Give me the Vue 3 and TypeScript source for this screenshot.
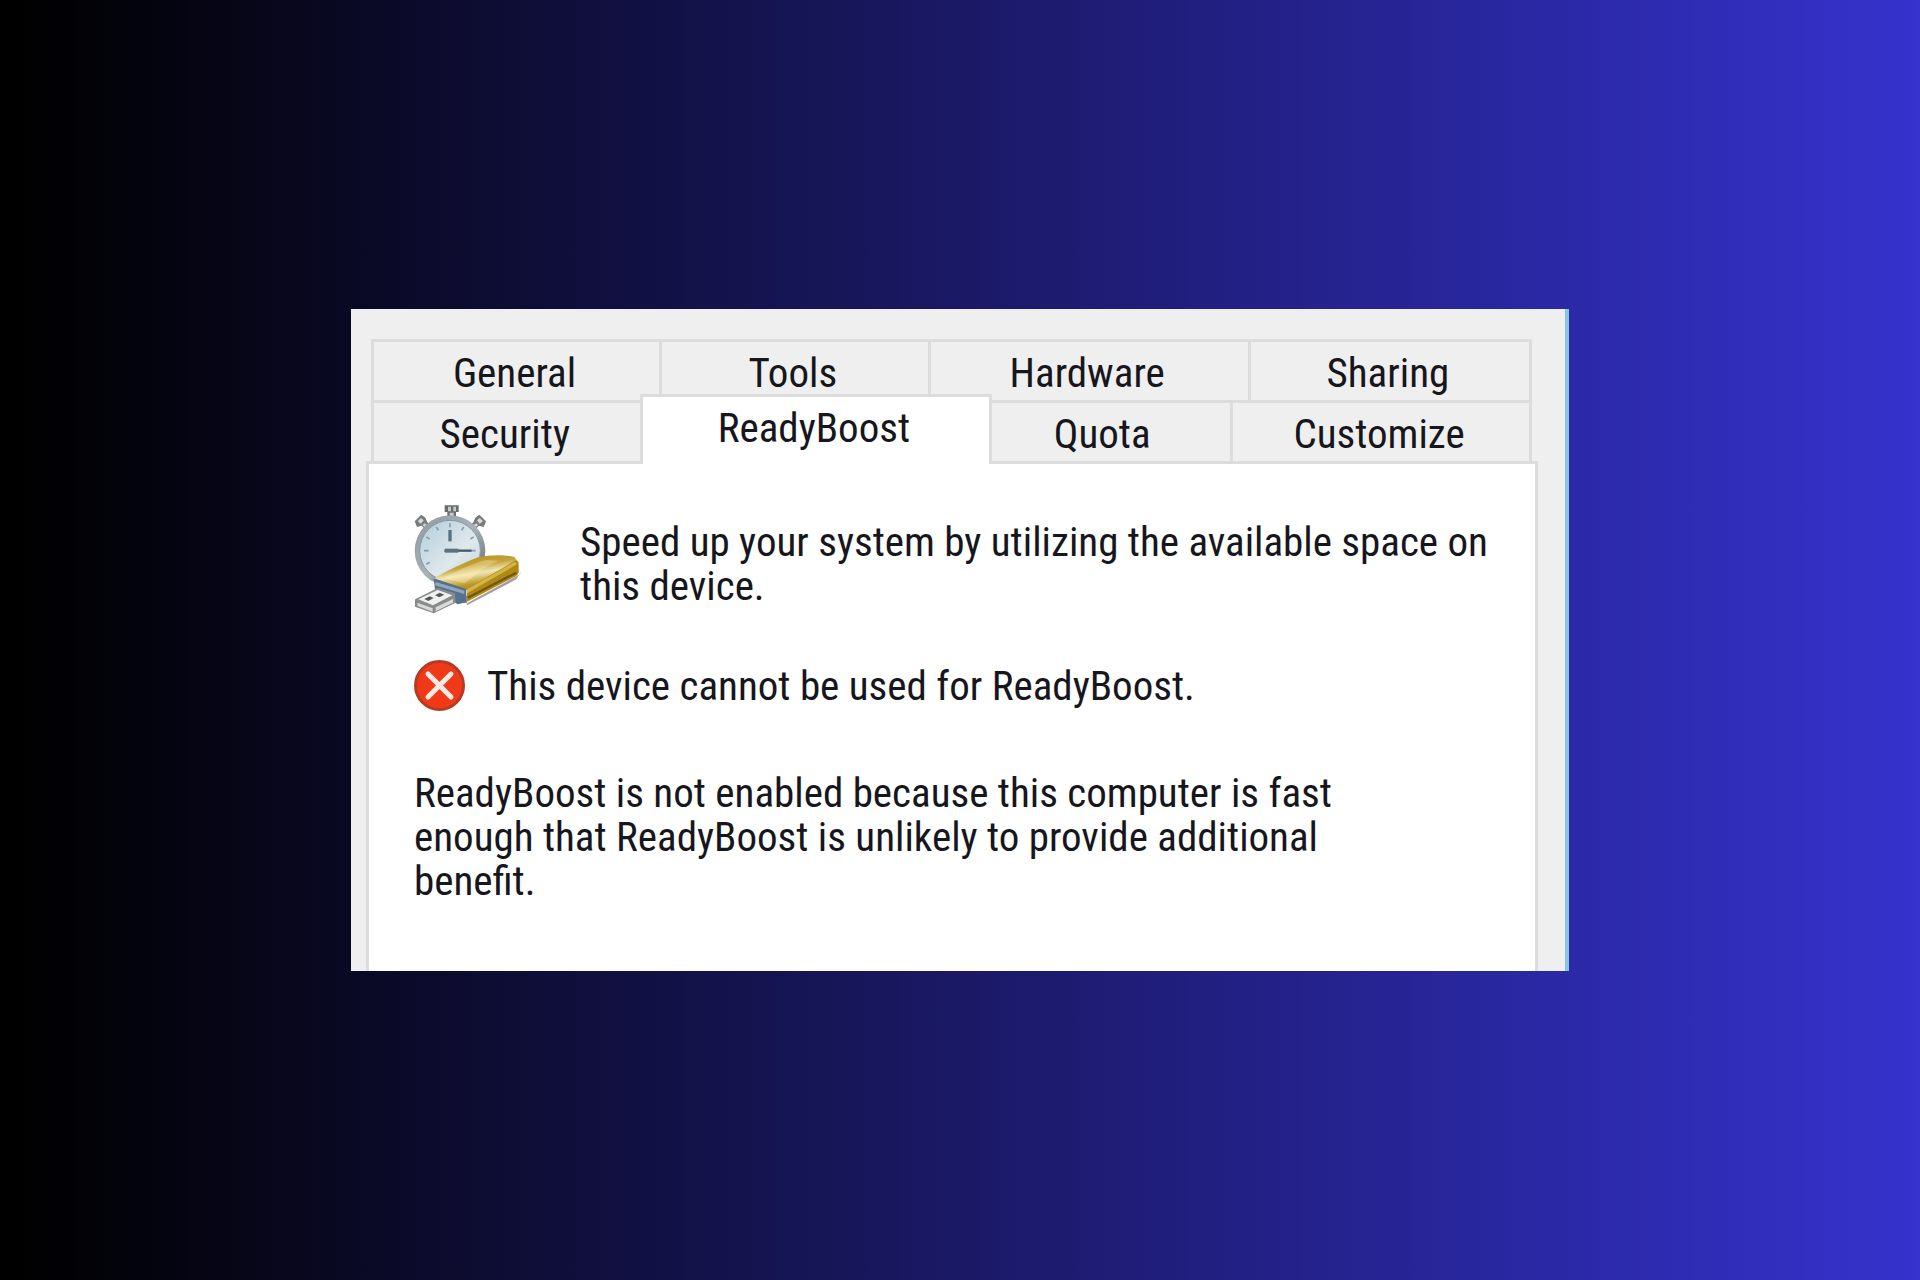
<script setup lang="ts">
import { ref } from 'vue'

interface Tab {
  name: string
  share: number
}

const rows: Tab[][] = [
  [
    { name: 'General', share: 288 },
    { name: 'Tools', share: 268 },
    { name: 'Hardware', share: 321 },
    { name: 'Sharing', share: 281 },
  ],
  [
    { name: 'Security', share: 268 },
    { name: 'ReadyBoost', share: 351 },
    { name: 'Quota', share: 254 },
    { name: 'Customize', share: 299 },
  ],
]

const active = ref('ReadyBoost')
</script>

<template>
  <main class="desktop">
    <section class="dialog">
      <div class="tabs" role="tablist">
        <div v-for="(row, i) in rows" :key="i" class="tab-row">
          <button
            v-for="tab in row"
            :key="tab.name"
            type="button"
            role="tab"
            class="tab"
            :class="{ selected: tab.name === active }"
            :aria-selected="tab.name === active"
            :style="{ flexGrow: tab.share }"
            @click="active = tab.name"
          >
            {{ tab.name }}
          </button>
        </div>
      </div>

      <div class="panel" role="tabpanel">
        <div class="intro">
          <svg class="watch" viewBox="45 40 330 330" aria-hidden="true">
            <defs>
              <linearGradient id="rim" x1="0" y1="0" x2="1" y2="1">
                <stop offset="0" stop-color="#8f979b" />
                <stop offset="0.5" stop-color="#a9b3b8" />
                <stop offset="1" stop-color="#5c6468" />
              </linearGradient>
              <linearGradient id="face" x1="0" y1="0" x2="1" y2="1">
                <stop offset="0" stop-color="#b4ccda" />
                <stop offset="0.6" stop-color="#dfe9ec" />
                <stop offset="1" stop-color="#c3d3d9" />
              </linearGradient>
              <linearGradient id="gold" x1="0.2" y1="0" x2="0.6" y2="1">
                <stop offset="0" stop-color="#b58d18" />
                <stop offset="0.35" stop-color="#c4a238" />
                <stop offset="0.55" stop-color="#f0e6b4" />
                <stop offset="0.8" stop-color="#c09a28" />
                <stop offset="1" stop-color="#a0790c" />
              </linearGradient>
            </defs>
            <path d="M137 44h42v20h-8v24h-26V64h-8z" fill="#6a6d6e" />
            <path d="M147 48h9v14h-9zM163 48h8v14h-8zM152 66h12v18h-12z" fill="#c9cccd" />
            <path d="M47 92l20-20 12 9 6 14 10 8-14 14-13-12-14 4z" fill="#777b7d" />
            <path d="M56 92l10-10 8 7-8 10zM76 98l8 5-6 6-7-5z" fill="#d8dadb" />
            <path d="M261 92l-20-20-12 9-6 14-10 8 14 14 13-12 14 4z" fill="#777b7d" />
            <path d="M252 92l-10-10-8 7 8 10zM232 98l-8 5 6 6 7-5z" fill="#d8dadb" />
            <circle cx="153" cy="180" r="106" fill="url(#rim)" />
            <circle cx="153" cy="180" r="91" fill="url(#face)" stroke="#8298a5" stroke-width="3" />
            <g stroke="#7f9fb6" stroke-width="5">
              <path d="M153 98v12M75 180h14M218 180h12M112 109l6 10M194 109l-6 10M82 139l10 6M224 139l-10 6M82 221l10-6" />
            </g>
            <path d="M153 118v34" stroke="#58717f" stroke-width="10" />
            <path d="M136 180h82" stroke="#465963" stroke-width="7" />
            <path d="M138 180h40" stroke="#5d7280" stroke-width="12" />
            <path d="M108 266l96 50v28l148-78 12-20-4-26 4 30-160 88-60-12z" fill="#77777d" opacity="0.7" />
            <path d="M104 264C150 236 196 216 238 200C270 192 318 191 346 199L356 212L204 298z" fill="url(#gold)" />
            <path d="M130 262C172 244 206 222 262 208L300 210C264 222 232 250 196 278z" fill="#fff3c4" opacity="0.35" />
            <path d="M204 294L350 209q9 2 9 12v24q-2 8-9 12L204 333z" fill="#b08813" />
            <path d="M204 296L348 213l6 8-150 87z" fill="#d0b648" />
            <path d="M206 321L352 246" stroke="#735706" stroke-width="7" />
            <path d="M104 263l98 32v40l-26 6-68-44z" fill="#56718f" />
            <path d="M110 274l86 26v10l-88-26z" fill="#91a7bc" />
            <path d="M48 326l68-34 52 16 2 28-66 32-56-20z" fill="#8a8b8c" />
            <path d="M58 326l58-28 44 16-58 30z" fill="#f0f0ee" />
            <path d="M55 336l46 17v10l-45-17zM110 350l52-25v11l-52 26z" fill="#d8d9d9" />
            <path d="M76 325l16-8 12 5-16 9zM108 314l14-8 14 6-15 8z" fill="#55585a" />
          </svg>
          <p class="intro-text">Speed up your system by utilizing the available space on this device.</p>
        </div>

        <div class="status">
          <svg class="error" viewBox="0 0 51 51" aria-hidden="true">
            <circle cx="25.5" cy="25.5" r="24" fill="#f03a17" stroke="#b83a26" stroke-width="3" />
            <path d="M14 14l23 23M37 14L14 37" stroke="#fde9e4" stroke-width="5" stroke-linecap="round" />
          </svg>
          <p>This device cannot be used for ReadyBoost.</p>
        </div>

        <p class="reason">
          ReadyBoost is not enabled because this computer is fast enough that ReadyBoost is unlikely to provide additional benefit.
        </p>
      </div>
    </section>
  </main>
</template>

<style>
body {
  margin: 0;
}
</style>

<style scoped>
.desktop {
  box-sizing: border-box;
  min-height: 100vh;
  padding: 0 351px;
  display: flex;
  align-items: center;
  background: linear-gradient(90deg, #000 1%, #3532cd 100%);
  color: #16161c;
  font-family: "Roboto Condensed", "Liberation Sans Narrow", Roboto, sans-serif;
  font-size: 41px;
  line-height: 44px;
}

.dialog {
  box-sizing: border-box;
  flex: 1;
  min-width: 0;
  padding: 30px 27px 0 15px;
  background: #efefef;
  border-right: 4px solid #86c5e6;
}

.tabs {
  margin: 0 6px 0 5px;
  border: solid #dcdcdc;
  border-width: 0 3px 0 0;
}

.tab-row {
  display: flex;
  height: 61px;
}

.tab {
  box-sizing: border-box;
  flex: 1 1 0;
  min-width: 0;
  height: 61px;
  padding: 3px 4px 0 0;
  border: solid #dcdcdc;
  border-width: 3px 0 0 3px;
  border-radius: 0;
  background: #efefef;
  color: inherit;
  font: inherit;
  text-align: center;
}

.tab.selected {
  position: relative;
  height: 70px;
  margin: -6px -17px -3px 0;
  padding: 0 4px 6px 0;
  border-right-width: 3px;
  background: #fff;
}

.panel {
  box-sizing: border-box;
  padding: 40px 30px 68px 45px;
  border: solid #dcdcdc;
  border-width: 3px 3px 0;
  background: #fff;
}

.panel p {
  margin: 0;
}

.intro {
  display: flex;
  gap: 56px;
}

.watch {
  flex: none;
  width: 110px;
  height: 110px;
}

.intro-text {
  padding-top: 16px;
}

.status {
  display: flex;
  align-items: center;
  gap: 22px;
  margin-top: 46px;
}

.error {
  flex: none;
  width: 51px;
  height: 51px;
}

.panel .reason {
  max-width: 940px;
  margin-top: 60px;
}
</style>
